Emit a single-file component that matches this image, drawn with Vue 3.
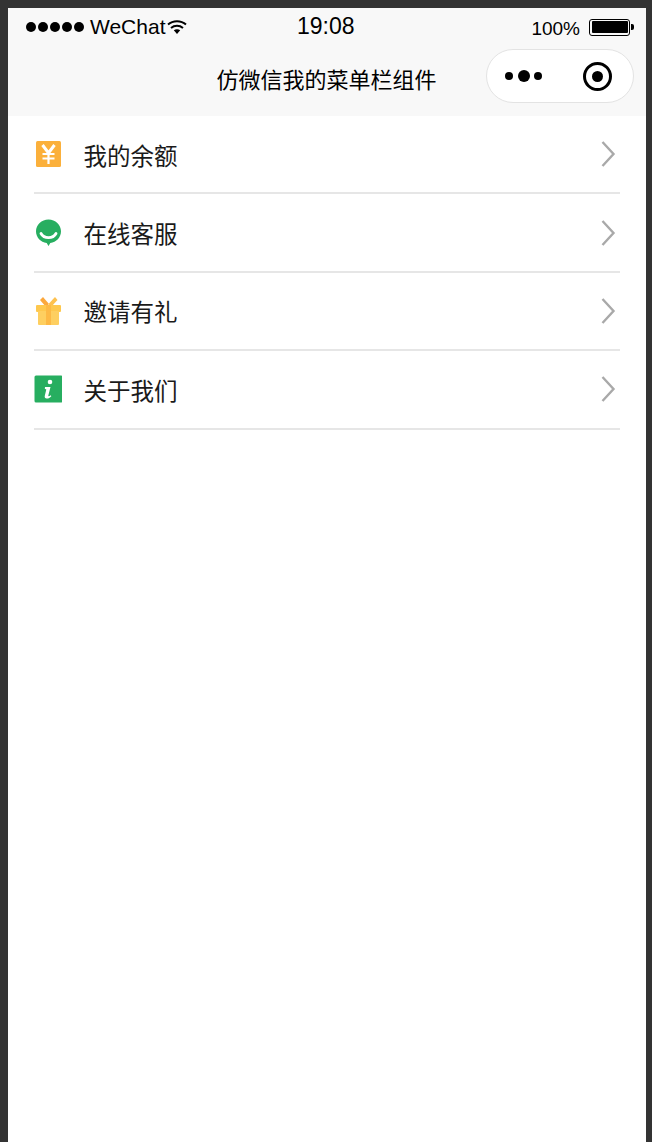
<template>
  <div class="phone">
    <div class="head">
      <div class="status-bar">
        <div class="status-left">
          <div class="signal">
            <span v-for="n in 5" :key="n" class="signal-dot"></span>
          </div>
          <span class="carrier">WeChat</span>
          <svg class="wifi" width="20" height="16" viewBox="0 0 20 16">
            <path d="M1 5.500C6 1 14 1 19 5.500" fill="none" stroke="#000" stroke-width="2" />
            <path d="M4 9C7.500 6 12.500 6 16 9" fill="none" stroke="#000" stroke-width="2" />
            <path d="M6.800 11.200C8.600 9.800 11.400 9.800 13.200 11.200L10 15Z" fill="#000" />
          </svg>
        </div>
        <div class="status-time">19:08</div>
        <div class="status-right">
          <span class="percent">100%</span>
          <div class="battery">
            <div class="battery-fill"></div>
          </div>
          <div class="battery-tip"></div>
        </div>
      </div>
      <div class="nav-bar">
        <div class="nav-title">仿微信我的菜单栏组件</div>
        <div class="capsule">
          <div class="capsule-dots">
            <span class="dot-small"></span>
            <span class="dot-big"></span>
            <span class="dot-small"></span>
          </div>
          <div class="capsule-target"><span></span></div>
        </div>
      </div>
    </div>

    <div class="menu">
      <div v-for="item in menu" :key="item.name" class="menu-item">
        <div class="menu-icon">
          <svg v-if="item.icon == 'money'" width="28" height="28" viewBox="0 0 28 28">
            <rect x="2" y="1" width="25" height="26" rx="1.500" fill="#fbb03b" />
            <path d="M8.500 5L14.500 13L20.500 5" fill="none" stroke="#fff" stroke-width="3" />
            <path d="M8.500 14H20.500M8.500 18.500H20.500M14.500 13V24" fill="none" stroke="#fff" stroke-width="2.200" />
          </svg>
          <svg v-if="item.icon == 'service'" width="28" height="28" viewBox="0 0 28 28">
            <path d="M14.500 0.500C21.400 0.500 27 5.800 27 12.300C27 18.400 22.300 23.300 16.300 24L14.500 27L12.700 24C6.700 23.300 2 18.400 2 12.300C2 5.800 7.600 0.500 14.500 0.500Z" fill="#27ae60" />
            <path d="M7 14.500C10 20 19 20 22 14.500" fill="none" stroke="#fff" stroke-width="2.800" stroke-linecap="round" />
          </svg>
          <svg v-if="item.icon == 'gift'" width="28" height="28" viewBox="0 0 28 28">
            <path d="M9 0L15 7L12 10L6 3Z" fill="#fca83c" />
            <path d="M21 0L14.500 7L17 10L23.500 3Z" fill="#fdc14f" />
            <rect x="2" y="8" width="25" height="7" rx="1" fill="#fec84e" />
            <rect x="4" y="14" width="21" height="14" rx="1" fill="#fecf60" />
            <rect x="12" y="8" width="5" height="20" fill="#fdb945" />
          </svg>
          <svg v-if="item.icon == 'info'" width="28" height="28" viewBox="0 0 28 28">
            <rect x="0.500" y="0.500" width="28" height="27" rx="1.500" fill="#27ae60" />
            <circle cx="16" cy="7" r="2.300" fill="#fff" />
            <path d="M11 12H16.500L14.300 20.500C14.100 21.500 15 21.600 16.800 20.300L17.300 21.200C15.500 23.300 13.500 23.800 11.800 23.300C10.800 23 10.500 22 10.800 20.800L12.300 14.500L10.800 13.800Z" fill="#fff" />
          </svg>
        </div>
        <div class="menu-name">{{ item.name }}</div>
        <svg class="arrow" width="16" height="28" viewBox="0 0 16 28">
          <path d="M2.500 2L13.500 14L2.500 26" fill="none" stroke="#a9a9a9" stroke-width="2.400" />
        </svg>
      </div>
    </div>
  </div>
</template>

<script setup>
const menu = [
  { name: '我的余额', icon: 'money' },
  { name: '在线客服', icon: 'service' },
  { name: '邀请有礼', icon: 'gift' },
  { name: '关于我们', icon: 'info' },
]
</script>

<style>
body {
  background: #333333;
}
</style>

<style scoped>
.phone {
  box-sizing: border-box;
  height: 1142px;
  margin: 0 6px 0 8px;
  padding-top: 8px;
  font-family: "Liberation Sans", "Noto Sans CJK SC", sans-serif;
  color: #000;
  overflow: hidden;
}

.head {
  height: 108px;
  background: #f8f8f8;
}

.status-bar {
  height: 38px;
  position: relative;
  display: flex;
  justify-content: space-between;
  align-items: center;
  padding: 0 12px 0 18px;
}

.status-left,
.status-right {
  display: flex;
  align-items: center;
}

.signal {
  display: flex;
  gap: 2px;
}

.signal-dot {
  width: 10px;
  height: 10px;
  border-radius: 50%;
  background: #000;
}

.carrier {
  font-size: 21px;
  margin-left: 6px;
}

.wifi {
  margin-left: 2px;
}

.status-time {
  position: absolute;
  left: 289px;
  top: 5px;
  font-size: 23px;
}

.percent {
  font-size: 19px;
  margin-top: 3px;
}

.battery {
  box-sizing: border-box;
  width: 41px;
  height: 17px;
  margin-left: 9px;
  border: 1.500px solid #000;
  border-radius: 3px;
  padding: 1.500px;
}

.battery-fill {
  height: 100%;
  background: #000;
  border-radius: 1px;
}

.battery-tip {
  width: 3px;
  height: 6px;
  margin-left: 1px;
  background: #000;
  border-radius: 0 2px 2px 0;
}

.nav-bar {
  height: 70px;
  position: relative;
  display: flex;
  justify-content: center;
  align-items: center;
}

.nav-title {
  font-size: 22px;
  width: 220px;
  margin-top: -1px;
  margin-left: -1px;
  line-height: 1;
  white-space: nowrap;
}

.capsule {
  box-sizing: border-box;
  position: absolute;
  left: 478px;
  top: 3px;
  width: 148px;
  height: 54px;
  background: #fff;
  border: 1.500px solid #e3e3e3;
  border-radius: 27px;
  display: flex;
  align-items: center;
  padding: 0 21px 0 18px;
  justify-content: space-between;
}

.capsule-dots {
  display: flex;
  align-items: center;
  gap: 4.500px;
}

.dot-small {
  width: 8px;
  height: 8px;
  border-radius: 50%;
  background: #000;
}

.dot-big {
  width: 12px;
  height: 12px;
  border-radius: 50%;
  background: #000;
}

.capsule-target {
  box-sizing: border-box;
  width: 29px;
  height: 29px;
  border: 3px solid #000;
  border-radius: 50%;
  display: flex;
  align-items: center;
  justify-content: center;
}

.capsule-target span {
  width: 11px;
  height: 11px;
  border-radius: 50%;
  background: #000;
}

.menu {
  background: #fff;
  height: 1026px;
  padding: 0 26px;
}

.menu-item {
  box-sizing: border-box;
  height: 78.400px;
  display: flex;
  align-items: center;
  border-bottom: 2px solid #e6e6e6;
}

.menu-icon {
  width: 49.500px;
  height: 28px;
}

.menu-name {
  flex: 1;
  font-size: 23.500px;
  margin-top: 1px;
  color: #1a1a1a;
}

.arrow {
  margin-right: 4px;
}
</style>
